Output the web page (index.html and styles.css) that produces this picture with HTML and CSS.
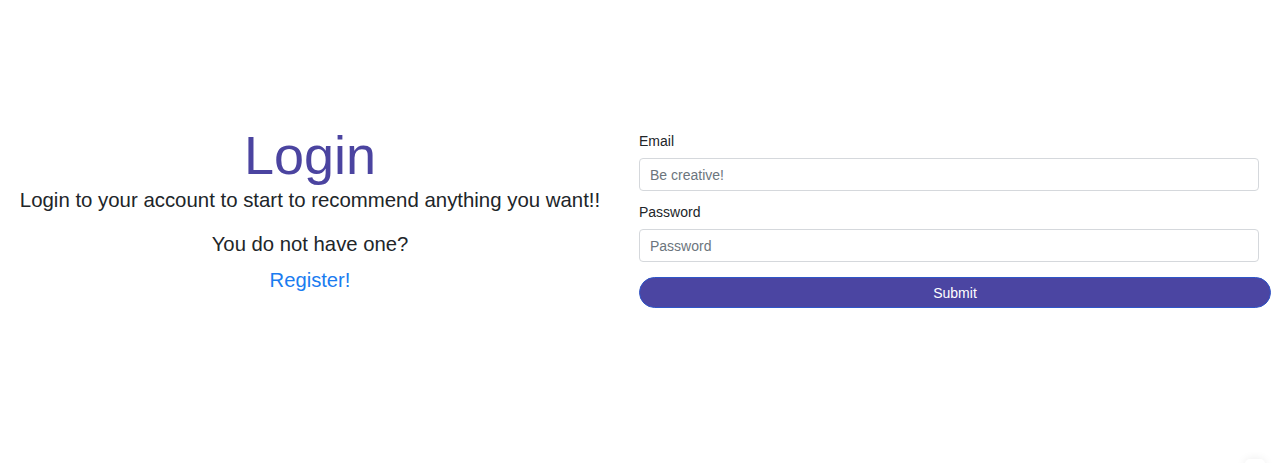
FILE: index.html
```html
<!DOCTYPE html>
<html lang="en">
<head>
<meta charset="utf-8">
<title>Login</title>
<link rel="stylesheet" href="styles.css">
</head>
<body>
<main class="page">
  <section class="intro">
    <h1 class="title">Login</h1>
    <p class="lead">Login to your account to start to recommend anything you want!!</p>
    <p class="ask">You do not have one?</p>
    <a class="register" href="#">Register!</a>
  </section>
  <form class="login-form">
    <div class="group">
      <label class="label" for="email">Email</label>
      <input class="field" id="email" type="email" placeholder="Be creative!">
    </div>
    <div class="group">
      <label class="label" for="password">Password</label>
      <input class="field" id="password" type="password" placeholder="Password">
    </div>
    <button class="submit" type="button">Submit</button>
  </form>
</main>
<div class="corner"></div>
</body>
</html>
```
FILE: styles.css
```css
html, body {
  margin: 0;
  padding: 0;
  background: #ffffff;
  font-family: "Liberation Sans", Arial, sans-serif;
  color: #212529;
  overflow: hidden;
}
.page {
  display: flex;
  gap: 19px;
  padding-top: 128px;
  height: 463px;
  box-sizing: border-box;
}
.intro {
  width: 620px;
  display: flex;
  flex-direction: column;
  align-items: center;
  text-align: center;
}
.title {
  margin: 0;
  font-size: 54px;
  line-height: 54px;
  font-weight: 400;
  color: #4b44a0;
}
.lead {
  margin: 6px 0 0;
  font-size: 20.4px;
  line-height: 24px;
}
.ask {
  margin: 20px 0 0;
  font-size: 20.3px;
  line-height: 24px;
}
.register {
  margin-top: 12px;
  font-size: 20.2px;
  line-height: 24px;
  color: #1a7cf0;
  text-decoration: none;
}
.login-form {
  width: 632px;
  padding-top: 3px;
  display: flex;
  flex-direction: column;
}
.group {
  display: flex;
  flex-direction: column;
  margin-bottom: 11px;
}
.label {
  font-size: 14px;
  line-height: 21px;
  margin-bottom: 6px;
}
.field {
  width: 620px;
  height: 33px;
  box-sizing: border-box;
  border: 1px solid #d5d8dc;
  border-radius: 4px;
  padding: 0 10px;
  font-family: "Liberation Sans", Arial, sans-serif;
  font-size: 14px;
  color: #495057;
}
.field::placeholder {
  color: #6c757d;
}
.submit {
  margin-top: 4px;
  width: 632px;
  height: 31px;
  border: 1px solid #2f56c8;
  border-radius: 16px;
  background: #4b45a2;
  color: #ffffff;
  font-family: "Liberation Sans", Arial, sans-serif;
  font-size: 14px;
}
.corner {
  position: fixed;
  right: 15px;
  bottom: -10px;
  width: 20px;
  height: 14px;
  border-radius: 5px;
  background: #fff;
  box-shadow: 0 0 10px rgba(0,0,0,0.08);
}
```
